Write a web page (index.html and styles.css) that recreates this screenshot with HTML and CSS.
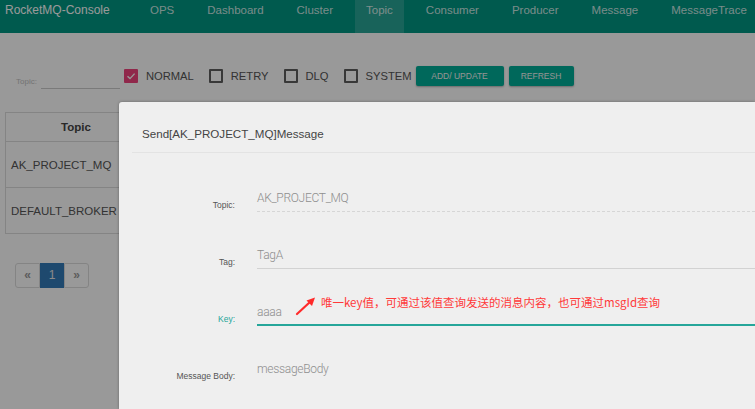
FILE: index.html
```html
<!DOCTYPE html>
<html lang="en">
<head>
<meta charset="utf-8">
<title>RocketMQ-Console</title>
<link rel="stylesheet" href="styles.css">
</head>
<body>
<header class="navbar">
  <div class="brand">RocketMQ-Console</div>
  <nav class="nav">
    <a class="nav-item">OPS</a>
    <a class="nav-item">Dashboard</a>
    <a class="nav-item">Cluster</a>
    <a class="nav-item active">Topic</a>
    <a class="nav-item">Consumer</a>
    <a class="nav-item">Producer</a>
    <a class="nav-item">Message</a>
    <a class="nav-item">MessageTrace</a>
  </nav>
</header>

<main class="content">
  <div class="filters">
    <div class="topic-filter">
      <span class="filter-label">Topic:</span>
      <span class="filter-input"></span>
    </div>
    <label class="check"><span class="box checked"><svg viewBox="0 0 14 14" width="14" height="14"><path d="M3.5 7.2 L6 9.6 L10.6 4.6" fill="none" stroke="#fff" stroke-width="1.4"/></svg></span>NORMAL</label>
    <label class="check"><span class="box"></span>RETRY</label>
    <label class="check"><span class="box"></span>DLQ</label>
    <label class="check"><span class="box"></span>SYSTEM</label>
    <div class="buttons">
      <button class="btn btn-add">ADD/ UPDATE</button>
      <button class="btn btn-refresh">REFRESH</button>
    </div>
  </div>

  <table class="topic-table">
    <thead><tr><th>Topic</th></tr></thead>
    <tbody>
      <tr><td>AK_PROJECT_MQ</td></tr>
      <tr><td>DEFAULT_BROKER</td></tr>
    </tbody>
  </table>

  <ul class="pager">
    <li>&laquo;</li>
    <li class="current">1</li>
    <li>&raquo;</li>
  </ul>
</main>

<div class="backdrop"></div>

<section class="modal">
  <div class="modal-header">Send[AK_PROJECT_MQ]Message</div>
  <form class="modal-form">
    <div class="form-row">
      <label class="form-label">Topic:</label>
      <div class="field disabled">AK_PROJECT_MQ</div>
    </div>
    <div class="form-row">
      <label class="form-label">Tag:</label>
      <div class="field">TagA</div>
    </div>
    <div class="form-row">
      <label class="form-label focus">Key:</label>
      <div class="field focused">aaaa</div>
    </div>
    <div class="form-row">
      <label class="form-label">Message Body:</label>
      <div class="field plain">messageBody</div>
    </div>
  </form>
  <div class="note">
    <svg class="note-arrow" viewBox="0 0 22 20" width="22" height="20">
      <path d="M2 18 L15 6" stroke="#ff2a2a" stroke-width="2.2" fill="none" stroke-linecap="round"/>
      <path d="M20 1.5 L11.5 4.5 L17 10 Z" fill="#ff2a2a"/>
    </svg>
    <span class="note-text">唯一key值，可通过该值查询发送的消息内容，也可通过msgId查询</span>
  </div>
</section>
</body>
</html>
```

FILE: styles.css
```css
html, body {
  margin: 0;
  padding: 0;
  width: 755px;
  height: 409px;
  overflow: hidden;
}
body {
  position: relative;
  background: #fff;
  font-family: "Liberation Sans", Arial, sans-serif;
  font-size: 11.5px;
  color: #555;
}

/* navbar */
.navbar {
  display: flex;
  height: 33px;
  background: #009683;
  overflow: hidden;
}
.brand {
  flex: 0 0 auto;
  width: 134px;
  padding-left: 5px;
  line-height: 20px;
  font-size: 12px;
  color: #fff;
}
.nav {
  display: flex;
  flex: 0 0 auto;
  gap: 11px;
}
.nav-item {
  flex: 0 0 auto;
  padding: 0 11px;
  line-height: 20px;
  height: 33px;
  font-size: 11.5px;
  color: rgba(255,255,255,0.8);
}
.nav-item.active {
  background: rgba(255,255,255,0.16);
}

/* content */
.content {
  padding: 29px 0 0 5px;
}
.filters {
  display: flex;
  align-items: center;
  height: 28px;
}
.topic-filter {
  display: flex;
  align-items: flex-end;
  align-self: flex-end;
  margin-left: 11px;
  margin-bottom: 1px;
}
.filter-label {
  font-size: 8px;
  color: #c2c2c2;
  line-height: 10px;
  margin-bottom: 2px;
}
.filter-input {
  width: 79px;
  height: 14px;
  margin-left: 4px;
  border-bottom: 1px solid #ccc;
}
.check {
  display: flex;
  align-items: center;
  color: #555;
  margin-left: 15px;
  line-height: 14px;
  font-size: 11.2px;
}
.topic-filter + .check {
  margin-left: 4px;
}
.box {
  box-sizing: border-box;
  width: 14px;
  height: 14px;
  border: 2px solid #5e5e5e;
  border-radius: 1px;
  margin-right: 8px;
  display: flex;
}
.box.checked {
  border: none;
  background: #f0447d;
}
.buttons {
  display: flex;
  gap: 5px;
  margin-left: 4px;
}
.btn {
  height: 20px;
  padding: 0;
  border: none;
  border-radius: 2px;
  background: #00ae98;
  color: #f4f4f4;
  font-family: "Liberation Sans", Arial, sans-serif;
  font-size: 8.5px;
  box-shadow: 0 1px 2px rgba(0,0,0,0.3);
}
.btn-add { width: 88px; }
.btn-refresh { width: 65px; }

.topic-table {
  margin-top: 22px;
  border-collapse: collapse;
  width: 142px;
}
.topic-table th, .topic-table td {
  border: 1px solid #ddd;
  text-align: left;
  padding: 0 5px;
  color: #555;
  white-space: nowrap;
}
.topic-table th {
  height: 28px;
  text-align: center;
  font-weight: bold;
  color: #444;
}
.topic-table td {
  height: 45px;
}

.pager {
  display: flex;
  list-style: none;
  margin: 29px 0 0 10px;
  padding: 0;
}
.pager li {
  box-sizing: border-box;
  width: 25px;
  height: 25px;
  line-height: 23px;
  text-align: center;
  border: 1px solid #ddd;
  color: #9a9a9a;
  font-size: 12px;
  font-weight: bold;
}
.pager li:first-child { border-radius: 3px 0 0 3px; }
.pager li:last-child { border-radius: 0 3px 3px 0; }
.pager li.current {
  width: 24px;
  background: #337ab7;
  border-color: #337ab7;
  color: #e6e6e6;
  font-weight: normal;
}

.backdrop {
  position: absolute;
  inset: 0;
  background: rgba(0,0,0,0.4);
}

/* modal */
.modal {
  position: absolute;
  top: 102px;
  left: 119px;
  width: 636px;
  height: 307px;
  overflow: hidden;
  background: #efefef;
  border-radius: 3px 0 0 0;
  box-shadow: 0 0 3px rgba(0,0,0,0.35);
}
.modal-header {
  margin: 0 0 0 13px;
  padding: 24px 0 10px 10px;
  line-height: 16px;
  font-size: 11.6px;
  color: #444;
  border-bottom: 1px solid #e3e3e3;
}
.modal-form {
  margin-top: 2px;
}
.form-row {
  display: flex;
  align-items: flex-end;
  height: 57px;
}
.form-label {
  width: 116px;
  text-align: right;
  font-size: 8.5px;
  line-height: 10px;
  margin-bottom: 2px;
  color: #555;
}
.form-label.focus {
  color: #26a69a;
}
.field {
  flex: 1;
  margin-left: 22px;
  line-height: 16px;
  padding-bottom: 5px;
  border-bottom: 1px solid #d2d2d2;
  font-family: Roboto, "Liberation Sans", sans-serif;
  font-weight: 300;
  font-size: 12px;
  letter-spacing: -0.3px;
  color: #8e8e8e;
}
.field.disabled {
  border-bottom: 1px dashed #d6d6d6;
}
.field.focused {
  padding-bottom: 4px;
  border-bottom: 2px solid #26a69a;
}
.field.plain {
  border-bottom-color: transparent;
}

.note {
  position: absolute;
  left: 176px;
  top: 192px;
  display: flex;
  align-items: center;
}
.note-arrow {
  margin-right: 4px;
  margin-top: 2px;
}
.note-text {
  font-family: "Noto Sans CJK SC", "Liberation Sans", sans-serif;
  font-size: 11.5px;
  line-height: 16px;
  color: #ff3a3a;
  margin-top: -6px;
}
```
